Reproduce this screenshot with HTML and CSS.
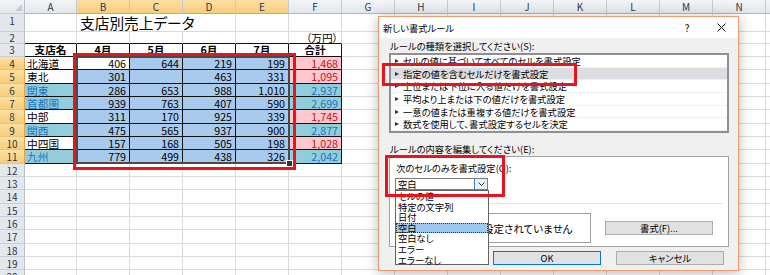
FILE: index.html
```html
<!DOCTYPE html>
<html lang="ja">
<head>
    <meta charset="UTF-8">
    <title>新しい書式ルール</title>
    <link rel="stylesheet" href="styles.css">
</head>
<body>
    <div class="sheet">
        <div class="row hd">
            <div class="c h corner"></div><div class="c a ch">A</div><div class="c ch on">B</div><div class="c ch on">C</div><div class="c ch on">D</div><div class="c ch on">E</div><div class="c ch">F</div><div class="c ch">G</div><div class="c ch">H</div><div class="c ch">I</div><div class="c ch">J</div><div class="c ch">K</div><div class="c ch">L</div><div class="c ch">M</div><div class="c ch">N</div><div class="c ch">O</div>
        </div>
        <div class="row r1">
            <div class="c h">1</div><div class="c a"></div><div class="c title nb">支店別売上データ</div><div class="c nb"></div><div class="c"></div><div class="c"></div><div class="c"></div><div class="c"></div><div class="c"></div><div class="c"></div><div class="c"></div><div class="c"></div><div class="c"></div><div class="c"></div><div class="c"></div><div class="c"></div>
        </div>
        <div class="row r2">
            <div class="c h">2</div><div class="c a tb"></div><div class="c tb"></div><div class="c tb"></div><div class="c tb"></div><div class="c tb"></div><div class="c tb unit">（万円）</div><div class="c"></div><div class="c"></div><div class="c"></div><div class="c"></div><div class="c"></div><div class="c"></div><div class="c"></div><div class="c"></div><div class="c"></div>
        </div>
        <div class="row r3">
            <div class="c h">3</div><div class="c a t th">支店名</div><div class="c t th">4月</div><div class="c t th">5月</div><div class="c t th">6月</div><div class="c t th">7月</div><div class="c t th">合計</div><div class="c"></div><div class="c"></div><div class="c"></div><div class="c"></div><div class="c"></div><div class="c"></div><div class="c"></div><div class="c"></div><div class="c"></div>
        </div>
        <div class="row">
            <div class="c h on">4</div><div class="c a t">北海道</div><div class="c t n">406</div><div class="c t n s">644</div><div class="c t n s">219</div><div class="c t n s">199</div><div class="c t n pk">1,468</div><div class="c"></div><div class="c"></div><div class="c"></div><div class="c"></div><div class="c"></div><div class="c"></div><div class="c"></div><div class="c"></div><div class="c"></div>
        </div>
        <div class="row">
            <div class="c h on">5</div><div class="c a t">東北</div><div class="c t n s">301</div><div class="c t n s"></div><div class="c t n s">463</div><div class="c t n s">331</div><div class="c t n pk">1,095</div><div class="c"></div><div class="c"></div><div class="c"></div><div class="c"></div><div class="c"></div><div class="c"></div><div class="c"></div><div class="c"></div><div class="c"></div>
        </div>
        <div class="row">
            <div class="c h on">6</div><div class="c a t aq">関東</div><div class="c t n s">286</div><div class="c t n s">653</div><div class="c t n s">988</div><div class="c t n s">1,010</div><div class="c t n aq">2,937</div><div class="c"></div><div class="c"></div><div class="c"></div><div class="c"></div><div class="c"></div><div class="c"></div><div class="c"></div><div class="c"></div><div class="c"></div>
        </div>
        <div class="row">
            <div class="c h on">7</div><div class="c a t aq">首都圏</div><div class="c t n s">939</div><div class="c t n s">763</div><div class="c t n s">407</div><div class="c t n s">590</div><div class="c t n aq">2,699</div><div class="c"></div><div class="c"></div><div class="c"></div><div class="c"></div><div class="c"></div><div class="c"></div><div class="c"></div><div class="c"></div><div class="c"></div>
        </div>
        <div class="row">
            <div class="c h on">8</div><div class="c a t">中部</div><div class="c t n s">311</div><div class="c t n s">170</div><div class="c t n s">925</div><div class="c t n s">339</div><div class="c t n pk">1,745</div><div class="c"></div><div class="c"></div><div class="c"></div><div class="c"></div><div class="c"></div><div class="c"></div><div class="c"></div><div class="c"></div><div class="c"></div>
        </div>
        <div class="row">
            <div class="c h on">9</div><div class="c a t aq">関西</div><div class="c t n s">475</div><div class="c t n s">565</div><div class="c t n s">937</div><div class="c t n s">900</div><div class="c t n aq">2,877</div><div class="c"></div><div class="c"></div><div class="c"></div><div class="c"></div><div class="c"></div><div class="c"></div><div class="c"></div><div class="c"></div><div class="c"></div>
        </div>
        <div class="row">
            <div class="c h on">10</div><div class="c a t">中四国</div><div class="c t n s">157</div><div class="c t n s">168</div><div class="c t n s">505</div><div class="c t n s">198</div><div class="c t n pk">1,028</div><div class="c"></div><div class="c"></div><div class="c"></div><div class="c"></div><div class="c"></div><div class="c"></div><div class="c"></div><div class="c"></div><div class="c"></div>
        </div>
        <div class="row">
            <div class="c h on">11</div><div class="c a t aq">九州</div><div class="c t n s">779</div><div class="c t n s">499</div><div class="c t n s">438</div><div class="c t n s">326</div><div class="c t n aq">2,042</div><div class="c"></div><div class="c"></div><div class="c"></div><div class="c"></div><div class="c"></div><div class="c"></div><div class="c"></div><div class="c"></div><div class="c"></div>
        </div>
        <div class="row"><div class="c h">12</div><div class="c a"></div><div class="c"></div><div class="c"></div><div class="c"></div><div class="c"></div><div class="c"></div><div class="c"></div><div class="c"></div><div class="c"></div><div class="c"></div><div class="c"></div><div class="c"></div><div class="c"></div><div class="c"></div><div class="c"></div></div>
        <div class="row"><div class="c h">13</div><div class="c a"></div><div class="c"></div><div class="c"></div><div class="c"></div><div class="c"></div><div class="c"></div><div class="c"></div><div class="c"></div><div class="c"></div><div class="c"></div><div class="c"></div><div class="c"></div><div class="c"></div><div class="c"></div><div class="c"></div></div>
        <div class="row"><div class="c h">14</div><div class="c a"></div><div class="c"></div><div class="c"></div><div class="c"></div><div class="c"></div><div class="c"></div><div class="c"></div><div class="c"></div><div class="c"></div><div class="c"></div><div class="c"></div><div class="c"></div><div class="c"></div><div class="c"></div><div class="c"></div></div>
        <div class="row"><div class="c h">15</div><div class="c a"></div><div class="c"></div><div class="c"></div><div class="c"></div><div class="c"></div><div class="c"></div><div class="c"></div><div class="c"></div><div class="c"></div><div class="c"></div><div class="c"></div><div class="c"></div><div class="c"></div><div class="c"></div><div class="c"></div></div>
        <div class="row"><div class="c h">16</div><div class="c a"></div><div class="c"></div><div class="c"></div><div class="c"></div><div class="c"></div><div class="c"></div><div class="c"></div><div class="c"></div><div class="c"></div><div class="c"></div><div class="c"></div><div class="c"></div><div class="c"></div><div class="c"></div><div class="c"></div></div>
        <div class="row"><div class="c h">17</div><div class="c a"></div><div class="c"></div><div class="c"></div><div class="c"></div><div class="c"></div><div class="c"></div><div class="c"></div><div class="c"></div><div class="c"></div><div class="c"></div><div class="c"></div><div class="c"></div><div class="c"></div><div class="c"></div><div class="c"></div></div>
        <div class="row"><div class="c h">18</div><div class="c a"></div><div class="c"></div><div class="c"></div><div class="c"></div><div class="c"></div><div class="c"></div><div class="c"></div><div class="c"></div><div class="c"></div><div class="c"></div><div class="c"></div><div class="c"></div><div class="c"></div><div class="c"></div><div class="c"></div></div>
        <div class="row"><div class="c h">19</div><div class="c a"></div><div class="c"></div><div class="c"></div><div class="c"></div><div class="c"></div><div class="c"></div><div class="c"></div><div class="c"></div><div class="c"></div><div class="c"></div><div class="c"></div><div class="c"></div><div class="c"></div><div class="c"></div><div class="c"></div></div>
        <div class="row"><div class="c h">20</div><div class="c a"></div><div class="c"></div><div class="c"></div><div class="c"></div><div class="c"></div><div class="c"></div><div class="c"></div><div class="c"></div><div class="c"></div><div class="c"></div><div class="c"></div><div class="c"></div><div class="c"></div><div class="c"></div><div class="c"></div></div>
    </div>

    <!-- selection outline and fill handle -->
    <div class="selbox"><span class="handle"></span></div>

    <!-- dialog window -->
    <div class="dialog">
        <div class="titlebar">
            <span class="dtitle">新しい書式ルール</span>
            <span class="tbtn">?</span>
            <span class="tbtn"><svg width="9" height="9" viewBox="0 0 9 9"><path d="M0.5 0.5L8.5 8.5M8.5 0.5L0.5 8.5" stroke="#111" stroke-width="1"/></svg></span>
        </div>
        <div class="dbody">
            <div class="label">ルールの種類を選択してください(S):</div>
            <div class="listbox">
                <div class="item">セルの値に基づいてすべてのセルを書式設定</div>
                <div class="item cur">指定の値を含むセルだけを書式設定</div>
                <div class="item">上位または下位に入る値だけを書式設定</div>
                <div class="item">平均より上または下の値だけを書式設定</div>
                <div class="item">一意の値または重複する値だけを書式設定</div>
                <div class="item">数式を使用して、書式設定するセルを決定</div>
            </div>
            <div class="label l2">ルールの内容を編集してください(E):</div>
            <div class="panel">
                <div class="label l3">次のセルのみを書式設定(O):</div>
                <div class="combo">
                    <span class="cval">空白</span>
                    <span class="cbtn"><svg width="7" height="4" viewBox="0 0 7 4"><path d="M0.5 0.5L3.5 3.5L6.5 0.5" fill="none" stroke="#333" stroke-width="1"/></svg></span>
                </div>
                <div class="sep"></div>
                <div class="preview-row">
                    <span class="plabel">プレビュー:</span>
                    <div class="preview">書式が設定されていません</div>
                    <div class="btn fmt">書式(F)...</div>
                </div>
                <div class="dropdown">
                    <div class="opt">セルの値</div>
                    <div class="opt">特定の文字列</div>
                    <div class="opt">日付</div>
                    <div class="opt hot">空白</div>
                    <div class="opt">空白なし</div>
                    <div class="opt">エラー</div>
                    <div class="opt">エラーなし</div>
                </div>
            </div>
            <div class="buttons">
                <div class="btn ok">OK</div>
                <div class="btn">キャンセル</div>
            </div>
        </div>
    </div>

    <!-- red annotation boxes -->
    <div class="mark m1"></div>
    <div class="mark m2"></div>
    <div class="mark m3"></div>
</body>
</html>
```

FILE: styles.css
```css
body {
    margin: 0;
    width: 770px;
    height: 275px;
    overflow: hidden;
    position: relative;
    background-color: #fff;
    font-family: "Noto Sans CJK JP", "Noto Sans", sans-serif;
    font-feature-settings: "palt";
    color: #000;
}

/* Spreadsheet */
.sheet {
    display: flex;
    flex-direction: column;
    width: 770px;
    overflow: hidden;
}

.row {
    display: flex;
    flex: none;
    height: 13.33px;
}

.row.hd { height: 14px; }
.row.r1 { height: 18px; }
.row.r2 { height: 12px; }
.row.r3 { height: 13px; }

.c {
    flex: none;
    width: 53px;
    box-sizing: border-box;
    border-right: 1px solid #d9dadc;
    border-bottom: 1px solid #d9dadc;
    padding: 1px 2px 0;
    font-size: 10.7px;
    line-height: 11.3px;
    white-space: nowrap;
    overflow: hidden;
}

.r2 .c,
.r3 .c {
    padding-top: 0;
    line-height: 11px;
}

.c.a { width: 52px; }

.c.h {
    width: 25px;
    padding: 1px 0 0;
    text-align: center;
    font-size: 10px;
    color: #2a3647;
    background-color: #e4e8ec;
    border-right: 1px solid #b7bec7;
    border-bottom: 1px solid #c9cfd6;
}

.r2 .c.h,
.r3 .c.h { padding-top: 0; }

.c.ch {
    text-align: center;
    font-size: 10px;
    line-height: 12px;
    color: #2a3647;
    background: linear-gradient(#f3f5f7, #e3e7eb);
    border-right: 1px solid #c4cad1;
    border-bottom: 1px solid #aeb6c0;
}

.c.on {
    background: linear-gradient(#fbe0a4, #f7cd78);
    border-bottom-color: #e9a23e;
}

.c.h.on {
    border-right-color: #e9a23e;
    border-bottom-color: #e8c57e;
}

.corner {
    position: relative;
    background: linear-gradient(#f3f5f7, #e3e7eb) !important;
}

.corner::after {
    content: "";
    position: absolute;
    right: 2px;
    bottom: 2px;
    border-left: 7px solid transparent;
    border-bottom: 7px solid #c3c9d0;
}

.title {
    overflow: visible;
    font-size: 14.7px;
    line-height: 17px;
    padding: 0 0 0 3px;
}

.nb { border-right: none; }

.tb { border-bottom-color: #111; }

.unit {
    text-align: right;
    padding: 0 3px 0 0;
}

.t {
    border-right-color: #111;
    border-bottom-color: #111;
}

.th {
    font-weight: bold;
    text-align: center;
}

.n {
    text-align: right;
    padding-right: 3px;
}

.s { background-color: #a8caec; }

.aq {
    background-color: #92cddc;
    color: #1874c2;
}

.pk {
    background-color: #ffc7ce;
    color: #c0101e;
}

.selbox {
    position: absolute;
    left: 76px;
    top: 56px;
    width: 214px;
    height: 108px;
    box-sizing: border-box;
    border: 2px solid #4a4a4a;
}

.handle {
    position: absolute;
    right: -5px;
    bottom: -5px;
    width: 5px;
    height: 5px;
    background-color: #333;
    border: 1px solid #fff;
}

/* Dialog */
.dialog {
    position: absolute;
    left: 378px;
    top: 16px;
    width: 361px;
    height: 255px;
    box-sizing: border-box;
    border: 1px solid #ef9a6c;
    background-color: #f0f0f0;
    box-shadow: 0 2px 12px rgba(0, 0, 0, 0.28);
    display: flex;
    flex-direction: column;
    font-size: 9.3px;
}

.titlebar {
    height: 21px;
    flex: none;
    display: flex;
    align-items: center;
    background-color: #fff;
    padding-left: 4px;
}

.dtitle { flex: 1; }

.tbtn {
    width: 34px;
    display: flex;
    justify-content: center;
    align-items: center;
    font-size: 10px;
}

.dbody {
    flex: 1;
    padding: 3px 9px 0 10px;
    display: flex;
    flex-direction: column;
}

.label {
    height: 11px;
    line-height: 11px;
    padding-left: 1px;
}

.listbox {
    margin-top: 1px;
    height: 80px;
    box-sizing: border-box;
    border: 2px solid #8e9096;
    background-color: #fff;
}

.item {
    height: 12.7px;
    box-sizing: border-box;
    border-bottom: 1px solid #f0f0f0;
    padding-left: 4px;
    display: flex;
    align-items: center;
}

.item::before {
    content: "";
    border-left: 4px solid #333;
    border-top: 2.5px solid transparent;
    border-bottom: 2.5px solid transparent;
    margin-right: 4px;
}

.item.cur { background-color: #dcdde3; }

.l2 { margin-top: 11px; }

.panel {
    position: relative;
    margin-top: 1px;
    height: 91px;
    box-sizing: border-box;
    border: 1px solid #a2a2a2;
    background-color: #fff;
    padding: 0 5px;
}

.l3 { margin-top: 6px; }

.combo {
    margin-top: 4px;
    width: 93px;
    height: 12px;
    box-sizing: border-box;
    border: 1px solid #7a7a7a;
    display: flex;
}

.cval {
    flex: 1;
    padding-left: 2px;
    line-height: 10px;
}

.cbtn {
    width: 12px;
    background-color: #e5f1fb;
    border-left: 1px solid #3c7fb1;
    display: flex;
    justify-content: center;
    align-items: center;
}

.sep {
    margin-top: 13px;
    height: 1px;
    background-color: #e6e6e6;
}

.preview-row {
    margin-top: 9px;
    display: flex;
    align-items: center;
}

.plabel { width: 38px; }

.preview {
    width: 158px;
    height: 30px;
    box-sizing: border-box;
    border: 1px solid #a0a0a0;
    display: flex;
    justify-content: center;
    align-items: center;
    font-size: 10.5px;
}

.btn {
    width: 108px;
    height: 14px;
    box-sizing: border-box;
    border: 1px solid #adadad;
    background-color: #e1e1e1;
    display: flex;
    justify-content: center;
    align-items: center;
}

.fmt { margin-left: 14px; }

.buttons {
    margin-top: 4px;
    padding-right: 5px;
    display: flex;
    justify-content: flex-end;
    gap: 15px;
}

.btn.ok { border-color: #0078d7; }

.dropdown {
    position: absolute;
    left: 5px;
    top: 33px;
    width: 94px;
    height: 75px;
    box-sizing: border-box;
    border: 1px solid #646464;
    background-color: #fff;
}

.opt {
    height: 10.6px;
    line-height: 10.6px;
    padding-left: 2px;
    box-sizing: border-box;
}

.opt.hot {
    background-color: #9dc8ef;
    outline: 1px dotted #333;
    outline-offset: -1px;
}

/* Red annotation boxes */
.mark {
    position: absolute;
    box-sizing: border-box;
    border: 3.6px solid #e8141d;
}

.m1 { left: 73px; top: 52.5px; width: 223px; height: 117.5px; }
.m2 { left: 382px; top: 63px; width: 195px; height: 22.5px; }
.m3 { left: 385px; top: 155px; width: 120px; height: 42px; }
```
